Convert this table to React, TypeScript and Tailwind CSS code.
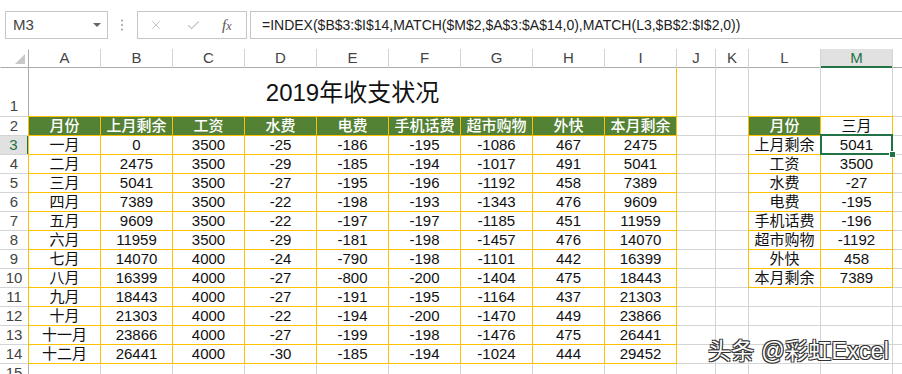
import { Check, X } from "lucide-react";

const letters = ["A", "B", "C", "D", "E", "F", "G", "H", "I", "J", "K", "L", "M", ""];

const heads = ["月份", "上月剩余", "工资", "水费", "电费", "手机话费", "超市购物", "外快", "本月剩余"];

const months: string[][] = [
  ["一月", "0", "3500", "-25", "-186", "-195", "-1086", "467", "2475"],
  ["二月", "2475", "3500", "-29", "-185", "-194", "-1017", "491", "5041"],
  ["三月", "5041", "3500", "-27", "-195", "-196", "-1192", "458", "7389"],
  ["四月", "7389", "3500", "-22", "-198", "-193", "-1343", "476", "9609"],
  ["五月", "9609", "3500", "-22", "-197", "-197", "-1185", "451", "11959"],
  ["六月", "11959", "3500", "-29", "-181", "-198", "-1457", "476", "14070"],
  ["七月", "14070", "4000", "-24", "-790", "-198", "-1101", "442", "16399"],
  ["八月", "16399", "4000", "-27", "-800", "-200", "-1404", "475", "18443"],
  ["九月", "18443", "4000", "-27", "-191", "-195", "-1164", "437", "21303"],
  ["十月", "21303", "4000", "-22", "-194", "-200", "-1470", "449", "23866"],
  ["十一月", "23866", "4000", "-27", "-199", "-198", "-1476", "475", "26441"],
  ["十二月", "26441", "4000", "-30", "-185", "-194", "-1024", "444", "29452"],
];

// lookup result for 三月 (L3:M10)
const lookup: [string, string][] = [
  ["上月剩余", "5041"],
  ["工资", "3500"],
  ["水费", "-27"],
  ["电费", "-195"],
  ["手机话费", "-196"],
  ["超市购物", "-1192"],
  ["外快", "458"],
  ["本月剩余", "7389"],
];

const cellText = "flex items-center justify-center text-[15px] leading-[18px] whitespace-nowrap";

function Blank() {
  return <div className="bg-white" />;
}

function Boxed({ children }: { children: React.ReactNode }) {
  return <div className={`${cellText} bg-white outline-1 outline-[#ffc000]`}>{children}</div>;
}

function GreenHead({ children }: { children: React.ReactNode }) {
  return (
    <div className={`${cellText} bg-[#548235] font-medium text-white outline-1 outline-[#ffc000]`}>
      {children}
    </div>
  );
}

function RowNum({ n, active, tall }: { n: number; active?: boolean; tall?: boolean }) {
  return (
    <div
      className={
        active
          ? "flex items-center justify-center border-r border-[#217346] bg-[#e1e1e1] text-[15px] text-[#217346] shadow-[1px_0_0_#217346]"
          : tall
            ? "flex items-end justify-center bg-white pb-px text-[15px] leading-[18px] text-[#444] shadow-[1px_0_0_#ababab]"
            : "flex items-center justify-center bg-white text-[15px] text-[#444] shadow-[1px_0_0_#ababab]"
      }
    >
      {n}
    </div>
  );
}

function FormulaBar() {
  return (
    <div className="flex h-[49px] items-start pt-[11px]">
      <div className="ml-[5px] flex h-[28px] w-[103px] shrink-0 items-center justify-between border border-[#c6c6c6] pl-[7px] pr-[6px] text-[15px] text-[#444]">
        <span>M3</span>
        <span className="h-0 w-0 border-x-[4px] border-t-[4px] border-x-transparent border-t-[#666]" />
      </div>
      <svg className="ml-[9px] mt-[8px] shrink-0" width="10" height="12" viewBox="0 0 10 12">
        <circle cx="5" cy="1.5" r="1" fill="#9a9a9a" />
        <circle cx="5" cy="6" r="1" fill="#9a9a9a" />
        <circle cx="5" cy="10.5" r="1" fill="#9a9a9a" />
      </svg>
      <div className="ml-[10px] flex h-[28px] w-[110px] shrink-0 items-center border border-[#c6c6c6]">
        <X className="ml-[11px] text-[#c4c4c4]" size={14} strokeWidth={1.6} />
        <Check className="ml-[23px] text-[#c4c4c4]" size={15} strokeWidth={1.8} />
        <span className="ml-[21px] font-['Liberation_Serif',serif] text-[15px] italic text-[#555]">
          f<span className="text-[12px]">x</span>
        </span>
      </div>
      <div className="ml-[3px] flex h-[28px] w-[700px] shrink-0 items-center border border-[#c6c6c6] pl-[11px] text-[14px] text-[#222]">
        =INDEX($B$3:$I$14,MATCH($M$2,$A$3:$A$14,0),MATCH(L3,$B$2:$I$2,0))
      </div>
    </div>
  );
}

export default function App() {
  const bodyRows = [];
  for (let r = 2; r <= 15; r++) {
    const cells = [];
    cells.push(<RowNum key="h" n={r} active={r === 3} />);
    for (let c = 0; c < 9; c++) {
      if (r === 2) cells.push(<GreenHead key={c}>{heads[c]}</GreenHead>);
      else if (r <= 14) cells.push(<Boxed key={c}>{months[r - 3][c]}</Boxed>);
      else cells.push(<Blank key={c} />);
    }
    cells.push(<Blank key="j" />, <Blank key="k" />);
    if (r === 2) {
      cells.push(<GreenHead key="l">月份</GreenHead>, <Boxed key="m">三月</Boxed>);
    } else if (r === 3) {
      cells.push(
        <Boxed key="l">{lookup[0][0]}</Boxed>,
        <div key="m" className={`${cellText} relative bg-white outline-1 outline-[#ffc000]`}>
          {lookup[0][1]}
          <div className="absolute -bottom-px -left-px -right-px -top-[2px] border-2 border-[#217346]" />
          <div className="absolute -bottom-[4px] -right-[4px] h-[7px] w-[7px] border border-white bg-[#217346]" />
        </div>
      );
    } else if (r <= 10) {
      cells.push(<Boxed key="l">{lookup[r - 3][0]}</Boxed>, <Boxed key="m">{lookup[r - 3][1]}</Boxed>);
    } else {
      cells.push(<Blank key="l" />, <Blank key="m" />);
    }
    cells.push(<Blank key="n" />);
    bodyRows.push(...cells.map((el, i) => ({ el, key: `${r}-${i}` })));
  }

  return (
    <div className="relative h-[374px] w-[902px] overflow-hidden bg-white font-['Liberation_Sans','Noto_Sans_CJK_SC',sans-serif] text-[#111]">
      <FormulaBar />

      <div className="grid w-max grid-cols-[28px_repeat(9,71px)_38px_32px_71px_71px_71px] grid-rows-[18px_48px_repeat(14,18px)] gap-px bg-[#d4d4d4]">
        {/* column headers */}
        <div className="relative bg-white shadow-[1px_1px_0_#ababab]">
          <div className="absolute bottom-[3px] right-[3px] h-0 w-0 border-b-[10px] border-l-[10px] border-b-[#c8c8c8] border-l-transparent" />
        </div>
        {letters.map((l) =>
          l === "M" ? (
            <div
              key={l}
              className="flex items-center justify-center border-b border-[#217346] bg-[#e1e1e1] pt-px text-[15px] text-[#217346] shadow-[0_1px_0_#217346]"
            >
              {l}
            </div>
          ) : (
            <div
              key={l || "N"}
              className="flex items-center justify-center bg-white pt-px text-[15px] text-[#444] shadow-[0_1px_0_#ababab]"
            >
              {l}
            </div>
          )
        )}

        {/* row 1: merged title */}
        <RowNum n={1} tall />
        <div className="col-span-9 flex items-end justify-center bg-white pb-[9px] text-[24px] leading-[28px] shadow-[1px_0_0_#ffc000]">
          2019年收支状况
        </div>
        <Blank />
        <Blank />
        <Blank />
        <Blank />
        <Blank />

        {bodyRows.map(({ el, key }) => (
          <div key={key} className="contents">
            {el}
          </div>
        ))}
      </div>

      <div className="absolute left-[708px] top-[337px] text-[23px] leading-[28px] tracking-[0.3px] text-white [text-shadow:-1px_-1px_0_#333,1px_-1px_0_#333,-1px_1px_0_#333,1px_1px_0_#333]">
        头条 @彩虹Excel
      </div>
    </div>
  );
}
